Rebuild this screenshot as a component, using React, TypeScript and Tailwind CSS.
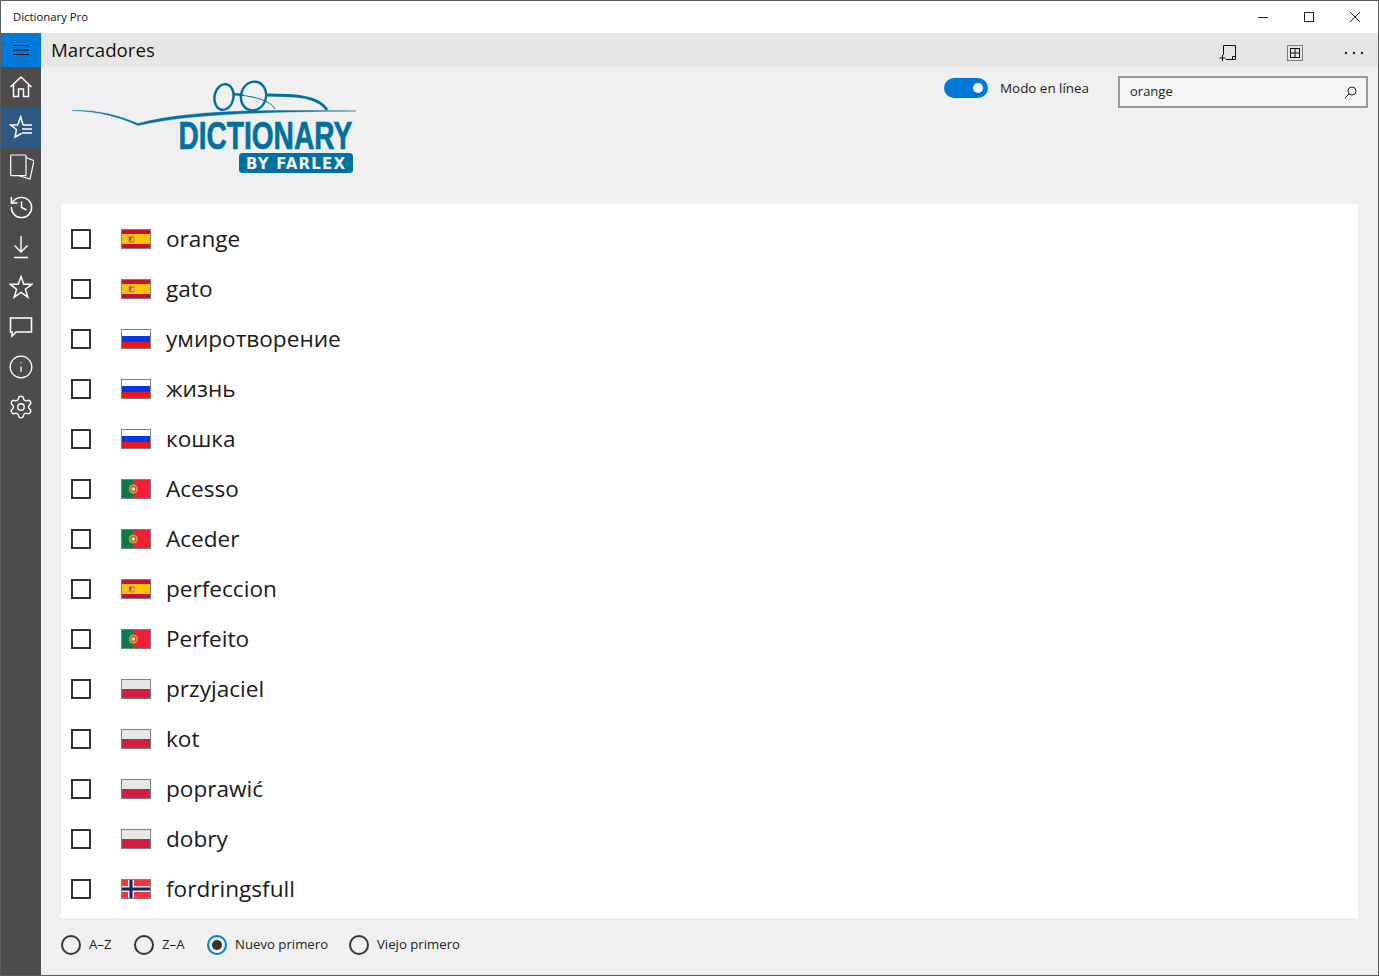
import React from 'react';
import { History, Info, Settings } from 'lucide-react';

type FlagName = 'es' | 'ru' | 'pt' | 'pl' | 'no';

const words: { flag: FlagName; text: string }[] = [
  { flag: 'es', text: 'orange' },
  { flag: 'es', text: 'gato' },
  { flag: 'ru', text: 'умиротворение' },
  { flag: 'ru', text: 'жизнь' },
  { flag: 'ru', text: 'кошка' },
  { flag: 'pt', text: 'Acesso' },
  { flag: 'pt', text: 'Aceder' },
  { flag: 'es', text: 'perfeccion' },
  { flag: 'pt', text: 'Perfeito' },
  { flag: 'pl', text: 'przyjaciel' },
  { flag: 'pl', text: 'kot' },
  { flag: 'pl', text: 'poprawić' },
  { flag: 'pl', text: 'dobry' },
  { flag: 'no', text: 'fordringsfull' },
];

const Flag = ({ name }: { name: FlagName }) => (
  <svg width="30" height="20" viewBox="0 0 30 20" className="shrink-0">
    {name === 'es' && (
      <>
        <rect width="30" height="20" fill="#c8102e" />
        <rect y="5" width="30" height="10" fill="#ffc400" />
        <rect x="7.5" y="7" width="6" height="6.5" rx="1.5" fill="#c9803f" />
        <rect x="8.5" y="8" width="2" height="3" fill="#a33a2a" />
        <rect x="10.5" y="9" width="2" height="3" fill="#e3c9a0" />
      </>
    )}
    {name === 'ru' && (
      <>
        <rect width="30" height="7" fill="#ffffff" />
        <rect y="7" width="30" height="6" fill="#0039e6" />
        <rect y="13" width="30" height="7" fill="#f0141e" />
      </>
    )}
    {name === 'pt' && (
      <>
        <rect width="30" height="20" fill="#f01f35" />
        <rect width="12" height="20" fill="#0b7a4b" />
        <circle cx="12.3" cy="10" r="4.5" fill="#d9a02c" />
        <circle cx="12.3" cy="10" r="3" fill="#c8503c" />
        <circle cx="12.3" cy="10" r="1.8" fill="#e3e4ee" />
      </>
    )}
    {name === 'pl' && (
      <>
        <rect width="30" height="10" fill="#e9e6e6" />
        <rect y="10" width="30" height="10" fill="#d31f3f" />
      </>
    )}
    {name === 'no' && (
      <>
        <rect width="30" height="20" fill="#f5323f" />
        <rect x="7" width="6" height="20" fill="#f4e4e6" />
        <rect y="7" width="30" height="6" fill="#f4e4e6" />
        <rect x="8.5" width="3" height="20" fill="#12275f" />
        <rect y="8.5" width="30" height="3" fill="#12275f" />
      </>
    )}
    <rect x="0.5" y="0.5" width="29" height="19" fill="none" stroke="#808080" />
  </svg>
);

const HomeIcon = () => (
  <svg width="24" height="24" viewBox="0 0 24 24" fill="none" stroke="white" strokeWidth="1.5">
    <path d="M1.5 12 L12 2 L22.5 12 M4.5 10 V21.5 H9.5 V14 H14.5 V21.5 H19.5 V10" />
  </svg>
);

const StarListIcon = () => (
  <svg width="24" height="24" viewBox="0 0 24 24" fill="none" stroke="white" strokeWidth="1.5">
    <path d="M14 10 L11.7 1.7 L8.7 10 H1.7 L7.5 14.5 L6 22 L12.5 18.5 M14 10 H23 M13 14 H23 M13 18 H23" />
  </svg>
);

const CardsIcon = () => (
  <svg width="26" height="26" viewBox="0 0 26 26" fill="none" stroke="white" strokeWidth="1.2">
    <rect x="2.7" y="1" width="15.3" height="20.7" rx="1" />
    <path d="M18 3.5 L26 6.7 L22 25 L11 21.7" />
  </svg>
);

const DownloadIcon = () => (
  <svg width="22" height="24" viewBox="0 0 22 24" fill="none" stroke="white" strokeWidth="1.4">
    <path d="M11 1 V17 M4.5 10.5 L11 17 L17.5 10.5 M4 22.5 H18" />
  </svg>
);

const StarIcon = () => (
  <svg width="24" height="24" viewBox="0 0 24 24" fill="none" stroke="white" strokeWidth="1.5">
    <path d="M12 1.5 L14.8 9.2 H23 L16.4 14.2 L18.8 22.2 L12 17.4 L5.2 22.2 L7.6 14.2 L1 9.2 H9.2 Z" />
  </svg>
);

const ChatIcon = () => (
  <svg width="24" height="22" viewBox="0 0 24 22" fill="none" stroke="white" strokeWidth="1.6">
    <path d="M1.5 2 H22.5 V16 H7 L3 20 V16 H1.5 Z" />
  </svg>
);

const sideItems = [
  <HomeIcon key="home" />,
  <StarListIcon key="marks" />,
  <CardsIcon key="cards" />,
  <History key="history" size={27} strokeWidth={1.3} color="white" />,
  <DownloadIcon key="download" />,
  <StarIcon key="star" />,
  <ChatIcon key="chat" />,
  <Info key="info" size={26} strokeWidth={1.2} color="white" />,
  <Settings key="settings" size={26} strokeWidth={1.25} color="white" />,
];

const Logo = () => (
  <svg width="290" height="100" viewBox="70 78 290 100" className="shrink-0">
    <path d="M72 110.5 C100 110 120 116 138 123.5 C190 110 260 109.5 356 111 C260 112 190 114 138 125.5 C120 117.5 100 111 72 110.5 Z" fill="#00709f" stroke="#00709f" strokeWidth="0.4" />
    <g fill="none" stroke="#00709f" strokeWidth="2.4">
      <ellipse cx="224" cy="97" rx="9.5" ry="13" transform="rotate(10 224 97)" />
      <ellipse cx="253.5" cy="96" rx="12.5" ry="14.5" transform="rotate(15 253.5 96)" />
      <path d="M233 94 L243 95" />
      <path d="M266 95 C290 95 318 95 327 110" strokeWidth="2.8" />
      <path d="M240 95 C255 97 270 100 275 109" strokeWidth="1" />
    </g>
    <text
      transform="translate(178.5 149) scale(0.72 1)"
      fontFamily="'Liberation Sans', sans-serif"
      fontWeight="700"
      fontSize="39"
      fill="#00709f"
      stroke="#00709f"
      strokeWidth="0.7"
    >
      DICTIONARY
    </text>
    <rect x="239" y="153" width="114" height="20" rx="3.5" fill="#00709f" />
    <text x="246" y="168.7" fontFamily="'DejaVu Sans', sans-serif" fontWeight="700" fontSize="15" fill="#f0f0f0" textLength="99" lengthAdjust="spacing">BY FARLEX</text>
  </svg>
);

const Radio = ({ label, checked, className }: { label: string; checked?: boolean; className: string }) => (
  <div className={`flex items-center ${className}`}>
    <span className={`flex h-5 w-5 items-center justify-center rounded-full border-2 ${checked ? 'border-[#0078d7]' : 'border-[#333333]'}`}>
      {checked && <span className="h-[10px] w-[10px] rounded-full bg-[#333333]" />}
    </span>
    <span className="ml-2 text-[13.2px] text-[#222222]">{label}</span>
  </div>
);

export default function App() {
  return (
    <div className="flex h-[976px] w-[1379px] flex-col overflow-hidden border border-[#5c5c5c] bg-[#f0f0f0] font-['Open_Sans',sans-serif] text-black">
      {/* barra de titulo */}
      <div className="flex h-8 shrink-0 items-center justify-between bg-white">
        <span className="pl-3 text-[11.35px] text-[#111111]">Dictionary Pro</span>
        <div className="flex items-center">
          <div className="flex h-8 w-[46px] items-center justify-center">
            <svg width="12" height="12" viewBox="0 0 12 12"><path d="M1 6.5 H11" stroke="#222" /></svg>
          </div>
          <div className="flex h-8 w-[46px] items-center justify-center">
            <svg width="12" height="12" viewBox="0 0 12 12"><rect x="1.5" y="1.5" width="9" height="9" fill="none" stroke="#222" /></svg>
          </div>
          <div className="flex h-8 w-[46px] items-center justify-center">
            <svg width="12" height="12" viewBox="0 0 12 12"><path d="M1 1 L11 11 M11 1 L1 11" stroke="#222" /></svg>
          </div>
        </div>
      </div>

      <div className="flex min-h-0 flex-1">
        {/* menu lateral */}
        <div className="flex w-10 shrink-0 flex-col bg-[#4c4c4c]">
          <div className="flex h-[34px] shrink-0 items-center justify-center bg-[#0078d7]">
            <svg width="16" height="12" viewBox="0 0 16 12"><path d="M0 1.5 H16 M0 6 H16 M0 10.5 H16" stroke="#0b0b0b" /></svg>
          </div>
          {sideItems.map((icon, i) => (
            <div key={i} className={`flex h-10 shrink-0 items-center justify-center ${i === 1 ? 'bg-[#2c5a82]' : ''}`}>
              {icon}
            </div>
          ))}
        </div>

        <div className="flex min-w-0 flex-1 flex-col">
          {/* cabecalho */}
          <div className="flex h-[34px] shrink-0 items-center justify-between bg-[#e6e6e6]">
            <span className="pl-[10px] text-[18.7px] leading-none text-[#111111]">Marcadores</span>
            <div className="flex items-center pr-[14px] pt-[5px]">
              <svg width="18" height="18" viewBox="0 0 18 18" fill="none" stroke="#111" className="mr-[50px]">
                <path d="M4.5 11 V1.5 H16.5 V15.5 H7 M0.5 14 H6.5 M3.5 11 V17 M13.5 15.5 V12.5 H16.5" />
              </svg>
              <svg width="16" height="16" viewBox="0 0 16 16" fill="none" stroke="#111" className="mr-[41px]">
                <rect x="0.5" y="0.5" width="15" height="15" strokeDasharray="1 1" />
                <rect x="3.5" y="3.5" width="9" height="9" />
                <path d="M8 3.5 V12.5 M3.5 8 H12.5" />
              </svg>
              <svg width="20" height="4" viewBox="0 0 20 4" fill="#222">
                <circle cx="2" cy="2" r="1.2" />
                <circle cx="10" cy="2" r="1.2" />
                <circle cx="18" cy="2" r="1.2" />
              </svg>
            </div>
          </div>

          {/* logo, modo e busca */}
          <div className="flex h-[137px] shrink-0 items-start justify-between pl-[29px] pr-[10px]">
            <div className="pt-[11px]">
              <Logo />
            </div>
            <div className="flex items-center pt-[9px]">
              <div className="mb-2 flex items-center">
                <div className="flex h-5 w-11 items-center justify-end rounded-full bg-[#0078d7] pr-[5px]">
                  <span className="h-[10px] w-[10px] rounded-full bg-white" />
                </div>
                <span className="ml-3 text-[13.4px] text-[#222222]">Modo en línea</span>
              </div>
              <div className="ml-[29px] flex h-8 w-[250px] items-center justify-between border-2 border-[#999999] bg-[#f5f5f5] pl-[10px] pr-[9px]">
                <span className="text-[13px] text-[#222222]">orange</span>
                <svg width="13" height="13" viewBox="0 0 13 13" fill="none" stroke="#222">
                  <circle cx="8" cy="5" r="4" />
                  <path d="M5 8 L0.8 12.2" />
                </svg>
              </div>
            </div>
          </div>

          {/* lista */}
          <div className="mx-5 h-[714px] shrink-0 bg-white pt-[10px]">
            {words.map((w, i) => (
              <div key={i} className="flex h-[50px] items-center pl-[10px]">
                <span className="h-5 w-5 shrink-0 border-2 border-[#333333]" />
                <span className="ml-[30px]"><Flag name={w.flag} /></span>
                <span className="ml-[15px] text-[22.6px] leading-none text-[#1a1a1a]">{w.text}</span>
              </div>
            ))}
          </div>

          {/* ordem */}
          <div className="flex flex-1 items-center pl-5 pb-[3px]">
            <Radio label="A–Z" className="w-[73px]" />
            <Radio label="Z–A" className="w-[73px]" />
            <Radio label="Nuevo primero" checked className="w-[142px]" />
            <Radio label="Viejo primero" className="" />
          </div>
        </div>
      </div>
    </div>
  );
}
